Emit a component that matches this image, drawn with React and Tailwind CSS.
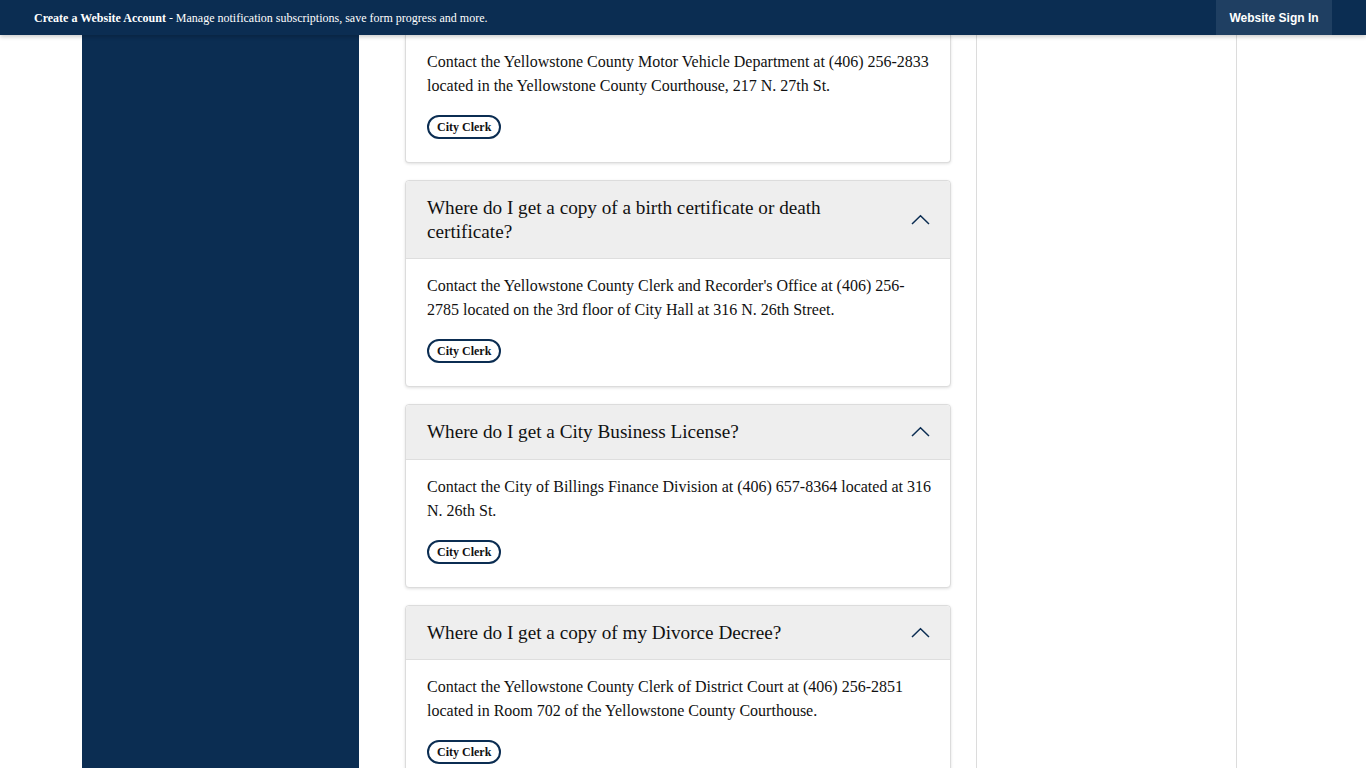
import React from "react";

const faqs = [
  {
    q: null,
    a: "Contact the Yellowstone County Motor Vehicle Department at (406) 256-2833 located in the Yellowstone County Courthouse, 217 N. 27th St.",
  },
  {
    q: "Where do I get a copy of a birth certificate or death certificate?",
    a: "Contact the Yellowstone County Clerk and Recorder's Office at (406) 256-2785 located on the 3rd floor of City Hall at 316 N. 26th Street.",
  },
  {
    q: "Where do I get a City Business License?",
    a: "Contact the City of Billings Finance Division at (406) 657-8364 located at 316 N. 26th St.",
  },
  {
    q: "Where do I get a copy of my Divorce Decree?",
    a: "Contact the Yellowstone County Clerk of District Court at (406) 256-2851 located in Room 702 of the Yellowstone County Courthouse.",
  },
];

function Chevron() {
  return (
    <svg width="19" height="11" viewBox="0 0 19 11" className="shrink-0">
      <polyline points="1,10 9.5,1.8 18,10" fill="none" stroke="#0b2d52" strokeWidth="1.5" />
    </svg>
  );
}

function Card({ q, a, first }) {
  return (
    <div
      className={
        "bg-white border border-[#dcdcdc] shadow-[0_1px_3px_rgba(0,0,0,0.12)] " +
        (first ? "border-t-0 rounded-b-[4px]" : "rounded-[4px]")
      }
    >
      {q && (
        <div className="flex items-center justify-between bg-[#eeeeee] border-b border-[#dedede] pl-[21px] pr-[20px] py-[15px] rounded-t-[4px]">
          <div className="text-[19.2px] leading-[23.5px] text-[#111] pr-10">{q}</div>
          <Chevron />
        </div>
      )}
      <div className="pl-[21px] pr-[18px] pb-[23px] pt-[15px]">
        <p className="text-[16px] leading-[24px] text-[#111]">{a}</p>
        <div className="mt-[17px] flex">
          <span className="inline-flex items-center h-[24px] px-[8px] rounded-full border-2 border-[#0b2d52] text-[12px] font-bold text-[#111] leading-none">
            City Clerk
          </span>
        </div>
      </div>
    </div>
  );
}

export default function App() {
  return (
    <div className="min-h-[768px] h-[768px] overflow-hidden bg-white" style={{ fontFamily: '"Liberation Serif", "Times New Roman", serif' }}>
      <div className="relative z-10 h-[35px] bg-[#0b2d52] flex items-center justify-between pl-[34px] pr-[34px] shadow-[0_2px_4px_rgba(0,0,0,0.2)]">
        <div className="text-[12px] text-white">
          <span className="font-bold">Create a Website Account</span> - Manage notification subscriptions, save form progress and more.
        </div>
        <div
          className="h-[35px] w-[116px] bg-[#1f3f62] flex items-center justify-center text-white text-[12px] font-bold"
          style={{ fontFamily: '"Liberation Sans", Arial, sans-serif' }}
        >
          Website Sign In
        </div>
      </div>
      <div className="flex h-[733px] pl-[82px]">
        <div className="w-[277px] bg-[#0b2d52] shrink-0" />
        <div className="w-[546px] ml-[46px] shrink-0 flex flex-col gap-[17px]">
          {faqs.map((f, i) => (
            <Card key={i} q={f.q} a={f.a} first={i === 0} />
          ))}
        </div>
        <div className="w-[261px] ml-[25px] shrink-0 border-l border-r border-[#dcdcdc]" />
      </div>
    </div>
  );
}
